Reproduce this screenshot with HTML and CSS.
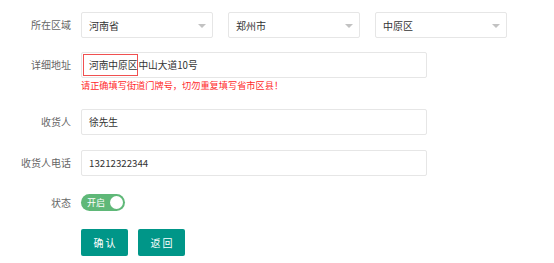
FILE: index.html
```html
<!DOCTYPE html>
<html>
<head>
  <meta charset="UTF-8" />
  <title>收货地址</title>
  <link rel="stylesheet" href="styles.css">
</head>
<body>
  <!-- Address form -->
  <form class="addr-form">
    <div class="form-item item-region">
      <label class="form-label">所在区域</label>
      <div class="form-block region-row">
        <div class="select"><span>河南省</span><i class="select-arrow"></i></div>
        <div class="select"><span>郑州市</span><i class="select-arrow"></i></div>
        <div class="select"><span>中原区</span><i class="select-arrow"></i></div>
      </div>
    </div>

    <div class="form-item item-address">
      <label class="form-label">详细地址</label>
      <div class="form-block">
        <div class="input input-wide"><span class="mark">河南中原区</span>中山大道10号</div>
        <div class="form-tip">请正确填写街道门牌号，切勿重复填写省市区县！</div>
      </div>
    </div>

    <div class="form-item item-name">
      <label class="form-label">收货人</label>
      <div class="form-block">
        <div class="input input-wide"><span class="plain">徐先生</span></div>
      </div>
    </div>

    <div class="form-item item-phone">
      <label class="form-label">收货人电话</label>
      <div class="form-block">
        <div class="input input-wide"><span class="plain">13212322344</span></div>
      </div>
    </div>

    <div class="form-item item-status">
      <label class="form-label">状态</label>
      <div class="form-block">
        <div class="switch"><em>开启</em><i class="knob"></i></div>
      </div>
    </div>

    <div class="form-item item-actions">
      <div class="form-label"></div>
      <div class="form-block btn-row">
        <button type="button" class="btn">确 认</button>
        <button type="button" class="btn">返 回</button>
      </div>
    </div>
  </form>
</body>
</html>
```

FILE: styles.css
```css
/* reset */
* {
  margin: 0;
  padding: 0;
  box-sizing: border-box;
}
body {
  font-family: "Noto Sans CJK SC", "Liberation Sans", sans-serif;
  font-size: 9.7px;
  color: #333;
  background: #fff;
}

/* form layout */
.addr-form {
  padding-top: 12px;
}
.form-item {
  display: flex;
  align-items: flex-start;
}
.form-label {
  width: 81px;
  padding-right: 10px;
  text-align: right;
  color: #666;
  font-size: 10px;
  line-height: 26px;
  flex-shrink: 0;
}
.form-block {
  flex: 1;
}
.item-address { margin-top: 14px; }
.item-name { margin-top: 18px; }
.item-phone { margin-top: 15px; }
.item-status { margin-top: 18px; }
.item-status .form-label { line-height: 17px; }
.item-actions { margin-top: 18px; }

/* selects */
.region-row {
  display: flex;
  gap: 15px;
}
.select {
  width: 132px;
  height: 26px;
  border: 1px solid #e6e6e6;
  border-radius: 2px;
  display: flex;
  align-items: center;
  padding: 0 7px;
  position: relative;
  font-size: 10px;
}
.select-arrow {
  position: absolute;
  right: 6px;
  top: 11px;
  width: 0;
  height: 0;
  border-left: 4px solid transparent;
  border-right: 4px solid transparent;
  border-top: 4px solid #c2c2c2;
}

/* text inputs */
.input {
  height: 26px;
  border: 1px solid #e6e6e6;
  border-radius: 2px;
  display: flex;
  align-items: center;
  padding-left: 1px;
}
.input-wide {
  width: 346px;
}
.plain {
  padding-left: 6px;
}
.mark {
  border: 1px solid #f05050;
  height: 22px;
  line-height: 20px;
  padding: 0 0 0 5px;
}
.form-tip {
  color: #ff2a2a;
  font-size: 9.2px;
  line-height: 12px;
  margin-top: 1px;
}

/* switch */
.switch {
  width: 44px;
  height: 17px;
  border-radius: 9px;
  background: #5fb878;
  display: flex;
  align-items: center;
  justify-content: space-between;
  padding: 0 2px 0 6px;
}
.switch em {
  font-style: normal;
  color: #fff;
  font-size: 9px;
}
.knob {
  width: 13px;
  height: 13px;
  border-radius: 50%;
  background: #fff;
}

/* buttons */
.btn-row {
  display: flex;
  gap: 10px;
}
.btn {
  width: 47px;
  height: 27px;
  border: none;
  border-radius: 2px;
  background: #009688;
  color: #fff;
  font-family: inherit;
  font-size: 10px;
  cursor: pointer;
}
.btn:hover {
  opacity: 0.8;
}
```
